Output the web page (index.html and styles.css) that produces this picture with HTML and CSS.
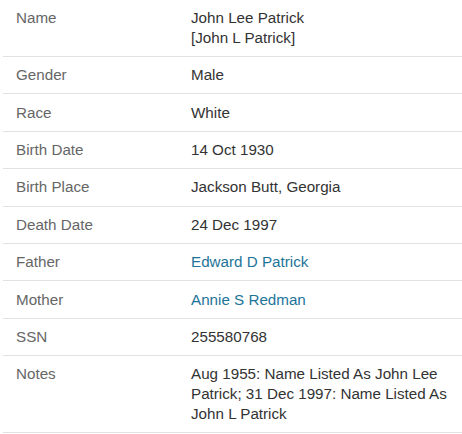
FILE: index.html
```html
<!DOCTYPE html>
<html>
<head>
<meta charset="utf-8">
<link rel="stylesheet" href="styles.css">
</head>
<body>
<table class="record">
  <tr><th>Name</th><td>John Lee Patrick<br>[John L Patrick]</td></tr>
  <tr><th>Gender</th><td>Male</td></tr>
  <tr><th>Race</th><td>White</td></tr>
  <tr><th>Birth Date</th><td>14 Oct 1930</td></tr>
  <tr><th>Birth Place</th><td>Jackson Butt, Georgia</td></tr>
  <tr><th>Death Date</th><td>24 Dec 1997</td></tr>
  <tr><th>Father</th><td><a class="link" href="#">Edward D Patrick</a></td></tr>
  <tr><th>Mother</th><td><a class="link" href="#">Annie S Redman</a></td></tr>
  <tr><th>SSN</th><td>255580768</td></tr>
  <tr class="last"><th>Notes</th><td>Aug 1955: Name Listed As John Lee Patrick; 31 Dec 1997: Name Listed As John L Patrick</td></tr>
</table>
</body>
</html>
```
FILE: styles.css
```css
html, body {
  margin: 0;
  padding: 0;
  background: #ffffff;
}
body {
  font-family: "Liberation Sans", Arial, sans-serif;
  font-size: 15.2px;
  line-height: 19.7px;
  color: #333333;
}
.record {
  margin-left: 3px;
  width: 459px;
  border-collapse: collapse;
}
.record tr {
  border-bottom: 1px solid #e2e2e2;
}
.record th {
  width: 175px;
  padding: 8.2px 0 8.5px 13px;
  text-align: left;
  vertical-align: top;
  font-weight: normal;
  color: #666666;
}
.record td {
  padding: 8.2px 10px 8.5px 0;
  vertical-align: top;
}
.link {
  color: #1d7498;
  text-decoration: none;
}
```
